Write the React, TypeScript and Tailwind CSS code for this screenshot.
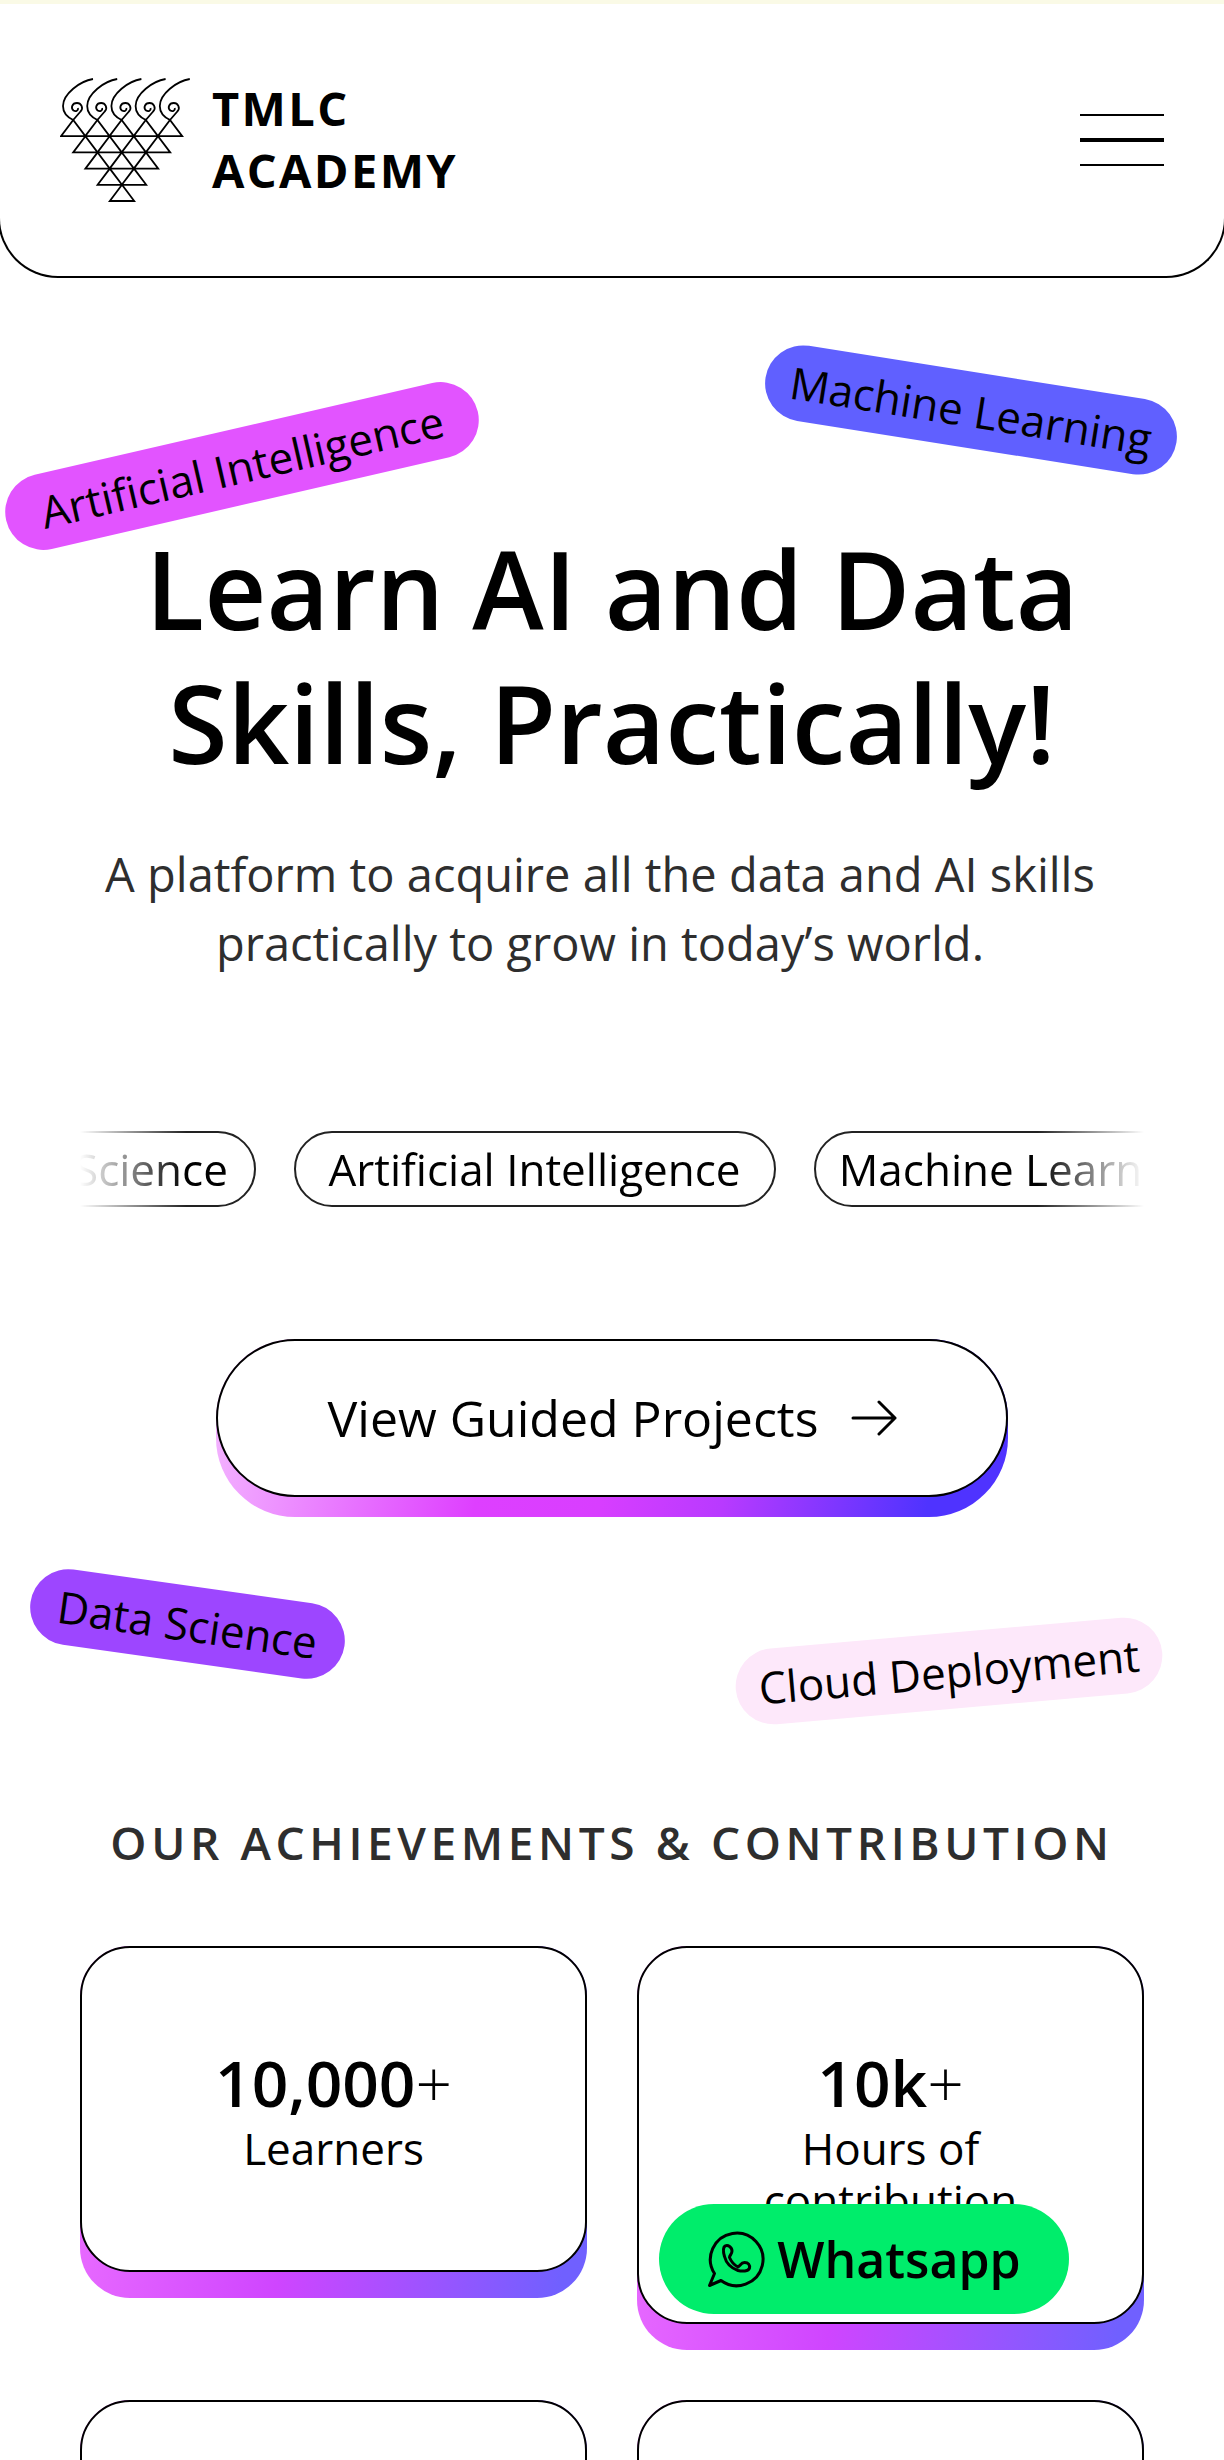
import { useState } from 'react';

const tags = [
  { name: 'Data Science', width: 'w-[317px]' },
  { name: 'Artificial Intelligence', width: 'w-[482px]' },
  { name: 'Machine Learning', width: 'w-[416px]' },
];

const stats = [
  { value: '10,000', label: 'Learners' },
  { value: '10k', label: 'Hours of contribution' },
];

function Logo() {
  const cols = [0, 1, 2, 3, 4];
  const rows = [5, 4, 3, 2, 1];
  return (
    <svg width="132" height="128" viewBox="0 0 132 128" fill="none" stroke="black" strokeWidth="1.8" aria-hidden="true">
      {rows.map((count, r) =>
        Array.from({ length: count }, (_, i) => {
          const x = 1 + r * 12.2 + i * 24.2;
          const y = 43 + r * 16.2;
          return <path key={`${r}-${i}`} d={`M${x + 12.2} ${y}L${x} ${y + 16.2}H${x + 24.4}Z`} />;
        })
      )}
      {cols.map((i) => (
        <path
          key={i}
          transform={`translate(${i * 24.2} 0)`}
          d="M33 2C20 4 3 17 3 29C3 36 7 40 13.200 43L20.500 34.500C24 31 21 26 17 26C12 26 10.500 31 13.500 33.500C16 35 18.500 33.500 18 31"
        />
      ))}
    </svg>
  );
}

function Arrow() {
  return (
    <svg width="46" height="38" viewBox="0 0 46 38" fill="none" stroke="black" strokeWidth="3" strokeLinecap="round" strokeLinejoin="round" aria-hidden="true">
      <path d="M2 19H44M28 3L44 19L28 35" />
    </svg>
  );
}

function WhatsappIcon() {
  return (
    <svg width="58" height="58" viewBox="0 0 58 58" fill="none" stroke="black" strokeWidth="3" strokeLinejoin="round" aria-hidden="true">
      <path d="M7.500 43.500A26.300 26.300 0 1 1 14 50.500L2.500 55.500Z" />
      <path d="M18 16C21 14.500 25 17 25 21C25 24 22.500 25.500 22.500 27.500C24 31 27 35 31 37C33 36 34 32.500 37.500 32.500C41.500 32.500 43 35 42.500 38C41.500 41.500 35 41.500 31 40.500C24 38 19 32.500 17.500 26.500C16.500 23 15.500 18 18 16Z" />
    </svg>
  );
}

const pill = 'absolute rounded-full h-[76px] flex items-center justify-center text-[44px] whitespace-nowrap';

export default function App() {
  const [menuOpen, setMenuOpen] = useState(false);

  return (
    <div className="h-screen overflow-x-hidden overflow-y-auto [scrollbar-width:none] bg-white text-black font-['Open_Sans','Noto_Sans',sans-serif]">
      <div className="h-1 bg-[#fafae6]" />

      {/* Header */}
      <header className="h-[274px] border-2 border-t-0 border-black rounded-b-[60px] -mx-0.5 px-[60px] flex justify-between">
        <a href="#" className="flex items-start gap-5 pt-[73px]">
          <Logo />
          <span className="text-[47px] leading-[62px] font-bold tracking-wider">
            TMLC<br />ACADEMY
          </span>
        </a>
        <button
          type="button"
          aria-label="Menu"
          aria-expanded={menuOpen}
          onClick={() => setMenuOpen(!menuOpen)}
          className="w-[84px] h-[52px] mt-[110px] flex flex-col justify-between"
        >
          <span className="w-full h-0.5 bg-black" />
          <span className="w-full h-1 bg-black" />
          <span className="w-full h-0.5 bg-black" />
        </button>
      </header>

      {/* Hero */}
      <section className="relative px-20 pt-[244px]">
        <span className={`${pill} left-0 top-[150px] w-[484px] bg-[#e254ff] -rotate-13`}>Artificial Intelligence</span>
        <span className={`${pill} right-[45px] top-[94px] w-[416px] bg-[#6060ff] rotate-9`}>Machine Learning</span>
        <span className={`${pill} left-[29px] top-[1308px] w-[317px] bg-[#9d46ff] rotate-8`}>Data Science</span>
        <span className={`${pill} right-[61px] top-[1355px] w-[428px] bg-[#fde8fa] -rotate-5`}>Cloud Deployment</span>

        <h1 className="text-[108px] leading-[134px] font-semibold text-center">
          Learn AI and Data<br />Skills, Practically!
        </h1>
        <p className="mt-[50px] pr-6 text-[47px] leading-[69px] text-center text-[#2e2e2e]">
          A platform to acquire all the data and AI skills<br />practically to grow in today’s world.
        </p>

        {/* Scrolling tags */}
        <div className="mt-[153px] overflow-hidden [mask-image:linear-gradient(to_right,transparent,black_10%,black_90%,transparent)]">
          <ul className="flex justify-center gap-[38px] pr-14">
            {tags.map((tag) => (
              <li
                key={tag.name}
                className={`${tag.width} h-[76px] shrink-0 flex items-center justify-center border-2 border-[#222] rounded-full text-[44px] whitespace-nowrap`}
              >
                {tag.name}
              </li>
            ))}
          </ul>
        </div>

        <a
          href="#projects"
          className="mt-[132px] mx-auto w-fit block rounded-[79px] pb-5 bg-[linear-gradient(100deg,#f4b8ff_0%,#de3fff_35%,#d83eff_50%,#b83aff_65%,#4f33ff_90%)]"
        >
          <span className="h-[158px] w-[792px] flex items-center justify-center gap-8 border-2 border-black rounded-[79px] bg-white text-[50px]">
            View Guided Projects
            <Arrow />
          </span>
        </a>
      </section>

      {/* Achievements */}
      <section className="px-20 pt-[291px]">
        <h2 className="text-[46px] leading-[68px] font-semibold tracking-widest text-center whitespace-nowrap text-[#2e2e2e]">
          OUR ACHIEVEMENTS &amp; CONTRIBUTION
        </h2>
        <div className="mt-[70px] grid grid-cols-2 items-start gap-[50px]">
          {stats.map((s) => (
            <div key={s.label} className="rounded-[50px] pb-[26px] bg-[linear-gradient(100deg,#ed72ff_0%,#cf45ff_45%,#7060ff_95%)]">
              <div className="px-20 py-24 border-2 border-black rounded-[50px] bg-white text-center">
                <p className="text-[64px] leading-[78px] font-semibold">
                  {s.value}<span className="font-light">+</span>
                </p>
                <p className="text-[44px] leading-[52px]">{s.label}</p>
              </div>
            </div>
          ))}
          {[0, 1].map((i) => (
            <div key={i} className="h-[352px] rounded-[50px] pb-[26px] bg-[linear-gradient(100deg,#ed72ff_0%,#cf45ff_45%,#7060ff_95%)]">
              <div className="h-full border-2 border-black rounded-[50px] bg-white" />
            </div>
          ))}
        </div>
      </section>

      <a
        href="#whatsapp"
        className="fixed right-[155px] bottom-[146px] w-[410px] h-[110px] flex items-center justify-center gap-3 rounded-full bg-[#00ed6b] text-[50px] font-semibold"
      >
        <WhatsappIcon />
        Whatsapp
      </a>
    </div>
  );
}
